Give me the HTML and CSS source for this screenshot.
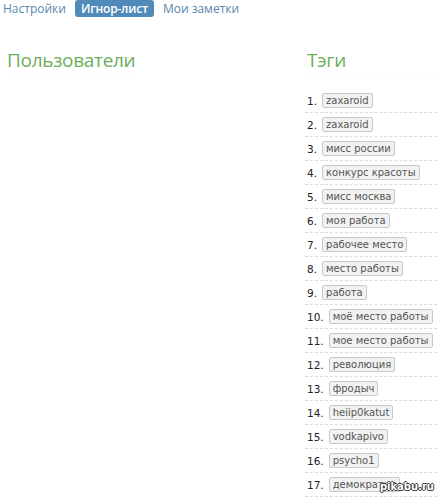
FILE: index.html
```html
<!DOCTYPE html>
<html lang="ru">
<head>
<meta charset="utf-8">
<link rel="stylesheet" href="styles.css">
</head>
<body>
<nav class="tabs">
  <a class="tab">Настройки</a>
  <a class="tab active">Игнор-лист</a>
  <a class="tab">Мои заметки</a>
</nav>
<main class="columns">
  <section class="col users">
    <h2 class="heading">Пользователи</h2>
  </section>
  <section class="col tags">
    <h2 class="heading">Тэги</h2>
    <ol class="taglist">
      <li class="row"><span class="num">1.</span><span class="tag">zaxaroid</span></li>
      <li class="row"><span class="num">2.</span><span class="tag">zaxaroid</span></li>
      <li class="row"><span class="num">3.</span><span class="tag">мисс россии</span></li>
      <li class="row"><span class="num">4.</span><span class="tag">конкурс красоты</span></li>
      <li class="row"><span class="num">5.</span><span class="tag">мисс москва</span></li>
      <li class="row"><span class="num">6.</span><span class="tag">моя работа</span></li>
      <li class="row"><span class="num">7.</span><span class="tag">рабочее место</span></li>
      <li class="row"><span class="num">8.</span><span class="tag">место работы</span></li>
      <li class="row"><span class="num">9.</span><span class="tag">работа</span></li>
      <li class="row"><span class="num">10.</span><span class="tag">моё место работы</span></li>
      <li class="row"><span class="num">11.</span><span class="tag">мое место работы</span></li>
      <li class="row"><span class="num">12.</span><span class="tag">революция</span></li>
      <li class="row"><span class="num">13.</span><span class="tag">фродыч</span></li>
      <li class="row"><span class="num">14.</span><span class="tag">heiip0katut</span></li>
      <li class="row"><span class="num">15.</span><span class="tag">vodkapivo</span></li>
      <li class="row"><span class="num">16.</span><span class="tag">psycho1</span></li>
      <li class="row"><span class="num">17.</span><span class="tag">демократия</span></li>
    </ol>
  </section>
</main>
<div class="watermark">pikabu.ru</div>
</body>
</html>
```

FILE: styles.css
```css
html, body {
  margin: 0;
  padding: 0;
  background: #fff;
  overflow: hidden;
}
body {
  width: 438px;
  height: 498px;
  position: relative;
  font-family: "Open Sans", "DejaVu Sans", sans-serif;
}
.tabs {
  display: flex;
  align-items: center;
  padding-left: 3px;
  height: 17px;
}
.tab {
  font-size: 12px;
  color: #5a87ad;
  line-height: 17px;
  margin-right: 9px;
}
.tab.active {
  background: #4f8ab8;
  color: #fff;
  border-radius: 3px;
  padding: 0 6px;
  font-weight: 600;
  letter-spacing: -0.2px;
}
.columns {
  display: flex;
  padding-left: 7px;
  padding-top: 27px;
}
.col.users {
  width: 300px;
  flex-shrink: 0;
}
.col.tags {
  flex-shrink: 0;
  width: 140px;
}
.heading {
  margin: 0;
  font-weight: 400;
  font-size: 19px;
  letter-spacing: -0.3px;
  color: #6cae5a;
  line-height: 32px;
  padding-bottom: 2px;
  border-bottom: 1px dotted #f5f5f5;
  width: 130px;
}
.taglist {
  list-style: none;
  margin: 10px 0 0 -2px;
  padding: 0;
}
.row {
  display: flex;
  align-items: center;
  height: 23px;
  border-bottom: 1px dashed #dcdcdc;
  font-family: "DejaVu Sans", sans-serif;
  font-size: 10px;
}
.num {
  color: #222;
  padding-left: 2px;
  margin-right: 5px;
  font-size: 10.5px;
}
.tag {
  display: inline-block;
  background: #f2f2f2;
  border: 1px solid #c8c8c8;
  border-radius: 2px;
  color: #555;
  padding: 0 3px;
  line-height: 13px;
  white-space: nowrap;
}
.watermark {
  position: absolute;
  right: 4px;
  bottom: 6px;
  font-family: "DejaVu Sans", sans-serif;
  font-size: 10px;
  font-weight: bold;
  color: #fff;
  text-shadow: -1px 0 #333, 1px 0 #333, 0 -1px #333, 0 1px #333;
}
```
